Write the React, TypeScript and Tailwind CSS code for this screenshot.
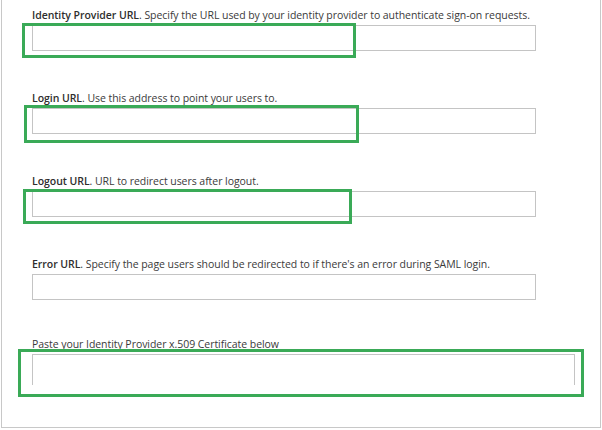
const FIELDS = [
  {
    title: 'Identity Provider URL',
    hint: 'Specify the URL used by your identity provider to authenticate sign-on requests.',
    mark: 'left-[-11px] top-[-3px] w-[334px] h-[35px]',
  },
  {
    title: 'Login URL',
    hint: 'Use this address to point your users to.',
    mark: 'left-[-9px] top-[-4px] w-[335px] h-[38px]',
  },
  {
    title: 'Logout URL',
    hint: 'URL to redirect users after logout.',
    mark: 'left-[-10px] top-[-3px] w-[329px] h-[35px]',
  },
  {
    title: 'Error URL',
    hint: "Specify the page users should be redirected to if there's an error during SAML login.",
    mark: '',
  },
]

export default function App() {
  return (
    <div className="w-[602px] h-[430px] bg-white font-['Open_Sans',sans-serif] text-[#3a3a3a]">
      <div className="ml-[1px] w-[600px] h-[428px] border-x border-b border-[#c8c8c8] pl-[30px] pt-[8px]">
        {FIELDS.map((f, i) => (
          <div key={i} className="mb-[40px]">
            <div className="text-[10.5px] leading-[14px] tracking-[-0.05px] whitespace-nowrap">
              <span className="font-semibold text-[#2e2e2e]">{f.title}</span>. {f.hint}
            </div>
            <div className="relative mt-[3px] w-[504px] h-[26px] border border-[#c4c4c4] bg-white">
              {f.mark && (
                <div className={`absolute border-[3px] border-[#3aaa57] ${f.mark}`} />
              )}
            </div>
          </div>
        ))}
        <div className="-mt-[3px]">
          <div className="text-[10.5px] leading-[14px] tracking-[-0.05px] whitespace-nowrap">
            Paste your Identity Provider x.509 Certificate below
          </div>
          <div className="relative mt-[3px] w-[543px] h-[31px] border-x border-t border-[#c4c4c4]">
            <div className="absolute left-[-15px] top-[-6px] w-[566px] h-[48px] border-[3px] border-[#3aaa57]" />
          </div>
        </div>
      </div>
    </div>
  )
}
